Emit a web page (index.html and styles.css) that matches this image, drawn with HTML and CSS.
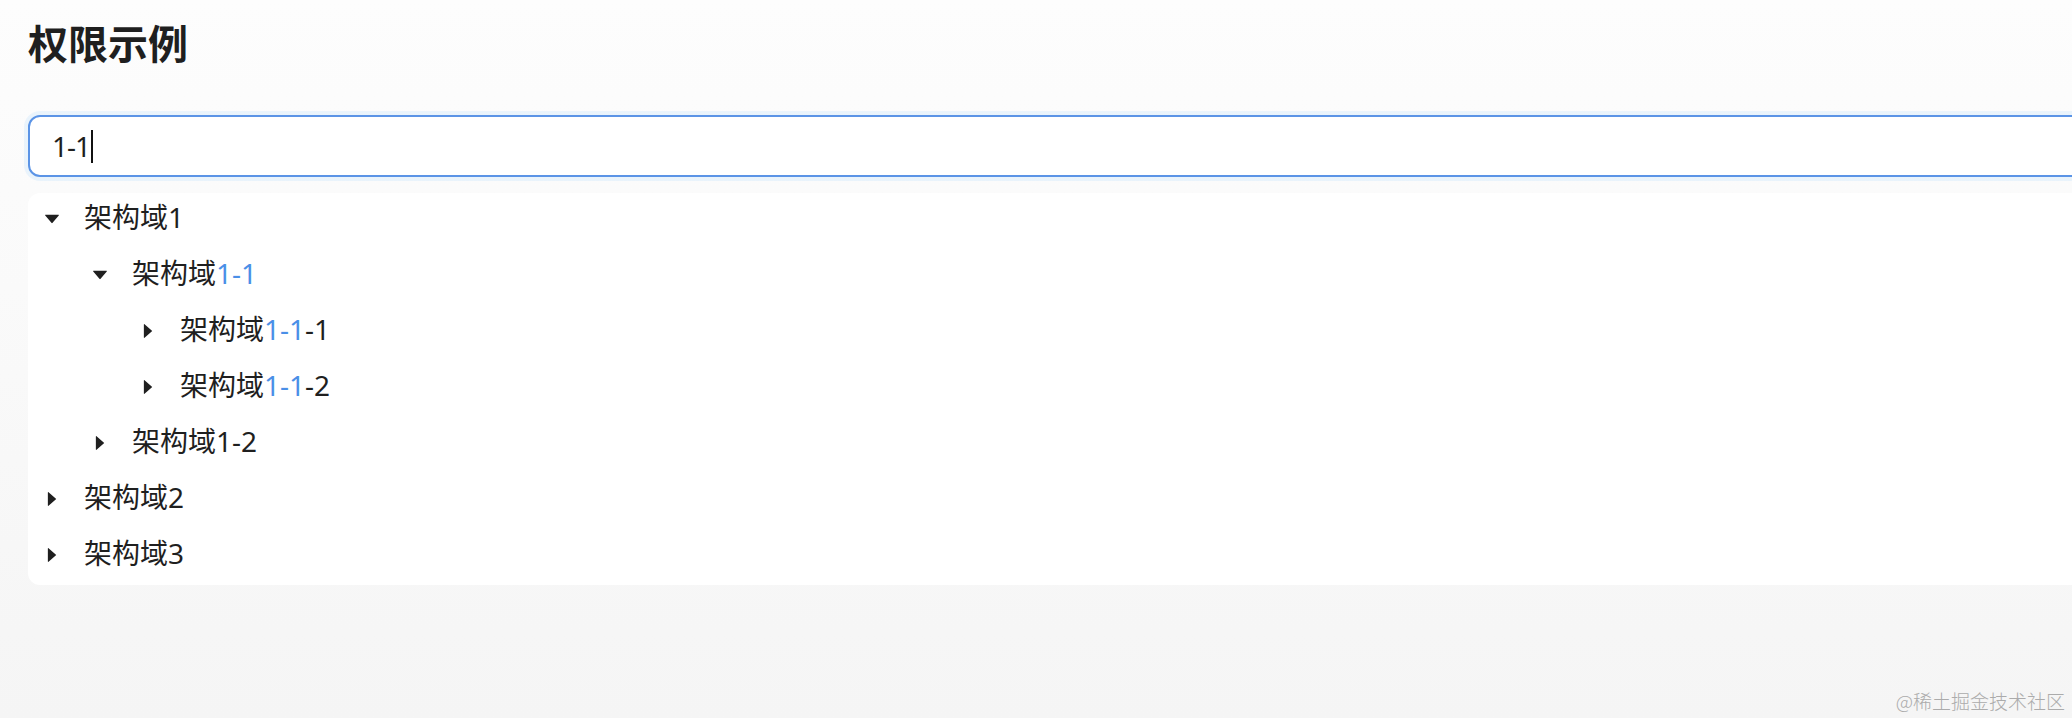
FILE: index.html
```html
<!DOCTYPE html>
<html lang="zh-CN">
<head>
<meta charset="utf-8">
<title>权限示例</title>
<link rel="stylesheet" href="styles.css">
</head>
<body>
<div class="page">
  <h4 class="title">权限示例</h4>
  <div class="search"><span class="search-text">1-1</span><span class="caret"></span></div>
  <div class="tree">
    <div class="node level-0">
      <span class="switcher"><svg class="icon-down" viewBox="0 0 1024 1024"><path d="M840.4 300H183.6c-19.7 0-30.7 20.8-18.5 35l328.4 380.8c9.4 10.9 27.5 10.9 37 0L858.9 335c12.2-14.2 1.2-35-18.5-35z"/></svg></span>
      <span class="label">架构域1</span>
    </div>
    <div class="node level-1">
      <span class="switcher"><svg class="icon-down" viewBox="0 0 1024 1024"><path d="M840.4 300H183.6c-19.7 0-30.7 20.8-18.5 35l328.4 380.8c9.4 10.9 27.5 10.9 37 0L858.9 335c12.2-14.2 1.2-35-18.5-35z"/></svg></span>
      <span class="label">架构域<span class="hl">1-1</span></span>
    </div>
    <div class="node level-2">
      <span class="switcher"><svg class="icon-right" viewBox="0 0 1024 1024"><path d="M715.8 493.5L335 165.1c-14.2-12.2-35-1.2-35 18.5v656.8c0 19.7 20.8 30.7 35 18.5l380.8-328.4c10.9-9.4 10.9-27.6 0-37z"/></svg></span>
      <span class="label">架构域<span class="hl">1-1</span>-1</span>
    </div>
    <div class="node level-2">
      <span class="switcher"><svg class="icon-right" viewBox="0 0 1024 1024"><path d="M715.8 493.5L335 165.1c-14.2-12.2-35-1.2-35 18.5v656.8c0 19.7 20.8 30.7 35 18.5l380.8-328.4c10.9-9.4 10.9-27.6 0-37z"/></svg></span>
      <span class="label">架构域<span class="hl">1-1</span>-2</span>
    </div>
    <div class="node level-1">
      <span class="switcher"><svg class="icon-right" viewBox="0 0 1024 1024"><path d="M715.8 493.5L335 165.1c-14.2-12.2-35-1.2-35 18.5v656.8c0 19.7 20.8 30.7 35 18.5l380.8-328.4c10.9-9.4 10.9-27.6 0-37z"/></svg></span>
      <span class="label">架构域1-2</span>
    </div>
    <div class="node level-0">
      <span class="switcher"><svg class="icon-right" viewBox="0 0 1024 1024"><path d="M715.8 493.5L335 165.1c-14.2-12.2-35-1.2-35 18.5v656.8c0 19.7 20.8 30.7 35 18.5l380.8-328.4c10.9-9.4 10.9-27.6 0-37z"/></svg></span>
      <span class="label">架构域2</span>
    </div>
    <div class="node level-0">
      <span class="switcher"><svg class="icon-right" viewBox="0 0 1024 1024"><path d="M715.8 493.5L335 165.1c-14.2-12.2-35-1.2-35 18.5v656.8c0 19.7 20.8 30.7 35 18.5l380.8-328.4c10.9-9.4 10.9-27.6 0-37z"/></svg></span>
      <span class="label">架构域3</span>
    </div>
  </div>
</div>
<div class="watermark">@稀土掘金技术社区</div>
</body>
</html>
```
FILE: styles.css
```css
html, body {
  margin: 0;
  padding: 0;
}
body {
  width: 2072px;
  height: 718px;
  overflow: hidden;
  position: relative;
  background: linear-gradient(to bottom, #fdfdfd 0%, #fafafa 40%, #f5f5f5 100%);
  font-family: "Noto Sans", "Noto Sans CJK SC", sans-serif;
  color: #1f1f1f;
}
.page {
  box-sizing: border-box;
  width: 2120px;
  padding: 14px 0 0 28px;
  display: flex;
  flex-direction: column;
}
.title {
  margin: 0;
  font-size: 40px;
  line-height: 56px;
  font-weight: 700;
  font-family: "Noto Sans CJK SC", sans-serif;
  color: #1f1f1f;
}
.search {
  margin-top: 45px;
  box-sizing: border-box;
  height: 62px;
  border: 2px solid #5b94e6;
  border-radius: 12px;
  background: #fff;
  box-shadow: 0 0 0 4px rgba(5, 145, 255, 0.07);
  padding: 0 22px;
  display: flex;
  align-items: center;
  font-size: 28px;
  color: #1f1f1f;
}
.search-text {
  line-height: 40px;
  letter-spacing: -1px;
}
.caret {
  display: inline-block;
  width: 2px;
  height: 33px;
  background: #111;
  margin-left: 1px;
}
.tree {
  margin-top: 16px;
  background: #fff;
  border-radius: 12px;
  display: flex;
  flex-direction: column;
}
.node {
  height: 56px;
  display: flex;
  align-items: center;
  font-size: 28px;
}
.level-1 { padding-left: 48px; }
.level-2 { padding-left: 96px; }
.switcher {
  box-sizing: border-box;
  width: 48px;
  height: 56px;
  padding-bottom: 4px;
  display: flex;
  align-items: center;
  justify-content: center;
  flex-shrink: 0;
}
.switcher svg {
  width: 20px;
  height: 20px;
  fill: #1f1f1f;
}
.label {
  padding: 0 8px;
  line-height: 48px;
  margin-bottom: 8px;
  font-family: "Noto Sans", "Noto Sans CJK SC", sans-serif;
}
.hl {
  color: #4a8fe7;
}
.watermark {
  position: absolute;
  right: 7px;
  bottom: 6px;
  font-size: 19px;
  line-height: 22px;
  color: #ababab;
  font-family: "Noto Sans CJK SC", sans-serif;
  font-weight: 300;
}
```
